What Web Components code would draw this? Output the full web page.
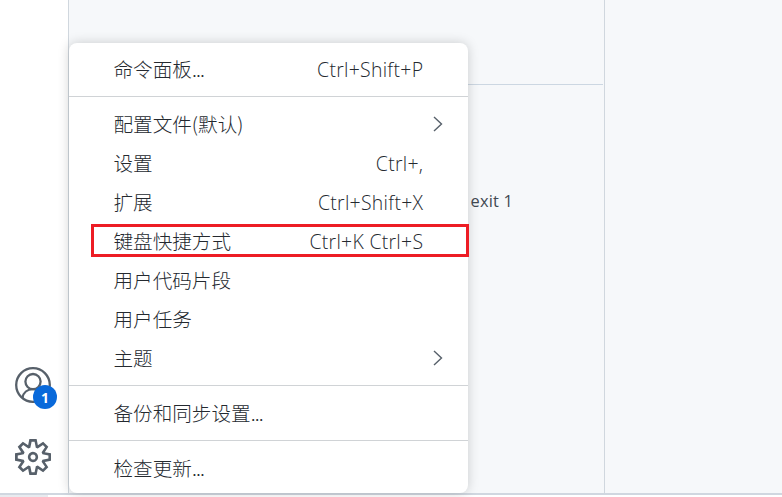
<!DOCTYPE html>
<html lang="zh-CN"><head><meta charset="utf-8"><title>菜单</title>
<style>html,body{margin:0;height:100%;overflow:hidden}body{font-family:"Open Sans","Noto Sans CJK SC",sans-serif;color:#24292f}</style></head>
<body><app-window></app-window>
<script>
function define(name, html) {
  const t = document.createElement('template');
  t.innerHTML = html;
  customElements.define(name, class extends HTMLElement {
    constructor() { super(); this.attachShadow({mode:'open'}).append(t.content.cloneNode(true)); }
  });
}
define('account-icon', `<style>:host{display:block;position:relative;width:36px;height:36px}svg{display:block}
.badge{position:absolute;left:18px;top:18px;width:24px;height:24px;border-radius:50%;background:#0969da;color:#fff;font:700 14px/25px "Open Sans",sans-serif;text-align:center}</style>
<svg width="36" height="36" viewBox="0 0 36 36" fill="none" stroke="#57606a" stroke-width="2.3"><circle cx="18" cy="18" r="16.8"/><circle cx="18" cy="14.6" r="7.6"/><path d="M7.4 31 C8.2 25.7 12.4 22.2 18 22.2 S27.8 25.7 28.6 31"/></svg>
<div class="badge"><slot></slot></div>`);
define('gear-icon', `<style>:host{display:block;width:36px;height:36px}svg{display:block}</style>
<svg width="36" height="36" viewBox="0 0 24 24" fill="#57606a"><path fill-rule="evenodd" d="M19.85 8.75l4.15.83v4.84l-4.15.83 2.35 3.52-3.43 3.43-3.52-2.35-.83 4.15H9.58l-.83-4.15-3.52 2.35-3.43-3.43 2.35-3.52L0 14.42V9.58l4.15-.83L1.8 5.23 5.23 1.8l3.52 2.35L9.58 0h4.84l.83 4.15 3.52-2.35 3.43 3.43-2.35 3.52zm-1.57 5.07l4-.81v-2l-4-.81-.54-1.3 2.29-3.43-1.43-1.43-3.43 2.29-1.3-.54-.81-4h-2l-.81 4-1.3.54-3.43-2.29-1.43 1.43L6.38 8.9l-.54 1.3-4 .81v2l4 .81.54 1.3-2.29 3.43 1.43 1.43 3.43-2.29 1.3.54.81 4h2l.81-4 1.3-.54 3.43 2.29 1.43-1.43-2.29-3.43.54-1.3zm-8.186-4.672A3.43 3.43 0 0 1 12 8.57 3.44 3.44 0 0 1 15.43 12a3.43 3.43 0 1 1-5.336-2.852zm.956 4.274c.281.188.612.288.95.288A1.7 1.7 0 0 0 13.71 12a1.71 1.71 0 1 0-2.66 1.422z"/></svg>`);
define('menu-line', `<style>:host{display:block;height:1px;margin:7px 0 8px;background:#d0d3d6}</style>`);
define('menu-row', `<style>:host{display:flex;position:relative;height:39px;padding:0 45px;align-items:center;justify-content:space-between;font-size:19.6px;line-height:39px;font-weight:300;white-space:nowrap}
svg{display:none;margin:0 -20px 2px 0}:host([submenu]) svg{display:block}
.label{font-family:"Noto Sans CJK SC",sans-serif;padding-bottom:2px;margin-left:-.5px}
::slotted(.dots){letter-spacing:-.8px}
.frame{display:none;position:absolute;left:22px;right:-1px;top:2px;height:33px;box-sizing:border-box;border:3px solid #ed1c24}
:host([marked]) .frame{display:block}</style>
<span class="label"><slot></slot></span><slot name="key"></slot>
<svg width="10" height="16" viewBox="0 0 10 16" fill="none" stroke="#57606a" stroke-width="1.4"><path d="M1 1l7.5 7L1 15"/></svg><div class="frame"></div>`);
define('context-menu', `<style>:host{display:block;box-sizing:border-box;width:399px;height:450px;padding:7px 0 5px;background:#fff;border-radius:8px;box-shadow:0 0 12px rgba(0,0,0,.18)}
.k{font-family:"Open Sans",sans-serif;font-weight:350;font-size:19.4px;letter-spacing:.3px;margin-right:-.3px}</style>
<menu-row>命令面板<span class="dots">...</span><span class="k" slot="key">Ctrl+Shift+P</span></menu-row><menu-line></menu-line>
<menu-row submenu>配置文件(默认)</menu-row>
<menu-row>设置<span class="k" slot="key">Ctrl+,</span></menu-row>
<menu-row>扩展<span class="k" slot="key">Ctrl+Shift+X</span></menu-row>
<menu-row marked>键盘快捷方式<span class="k" slot="key">Ctrl+K Ctrl+S</span></menu-row>
<menu-row>用户代码片段</menu-row><menu-row>用户任务</menu-row><menu-row submenu>主题</menu-row><menu-line></menu-line>
<menu-row>备份和同步设置<span class="dots">...</span></menu-row><menu-line></menu-line><menu-row>检查更新<span class="dots">...</span></menu-row>`);
define('activity-bar', `<style>:host{display:flex;flex-direction:column;justify-content:flex-end;gap:36px;box-sizing:border-box;width:69px;height:100%;padding:0 0 18px 15px;background:#fff;border-right:1px solid #d0d7de}</style>
<account-icon>1</account-icon><gear-icon></gear-icon>`);
define('editor-panel', `<style>:host{display:flex;flex-direction:column;box-sizing:border-box;width:536px;border-right:1px solid #d0d7de;background:#f6f8fa}
.top{height:84px;border-bottom:1px solid #ccd7e2;margin-right:1px}.text{padding:104px 0 0 401.5px;font:380 16.4px/24px "Open Sans",sans-serif;letter-spacing:.2px;color:#424a53}</style><div class="top"></div><div class="text">exit 1</div>`);
define('status-bar', `<style>:host{display:block;box-sizing:border-box;height:4px;border-top:2px solid #d0d7e0;background:linear-gradient(90deg,#e8ebef 48px,#fff 48px)}</style>`);
define('app-window', `<style>:host{display:flex;flex-direction:column;position:relative;width:782px;height:497px;overflow:hidden;background:#f6f8fa}.main{display:flex;height:493px}
context-menu{position:absolute;left:69px;top:43px}</style>
<div class="main"><activity-bar></activity-bar><editor-panel></editor-panel></div><status-bar></status-bar><context-menu></context-menu>`);
</script></body></html>
